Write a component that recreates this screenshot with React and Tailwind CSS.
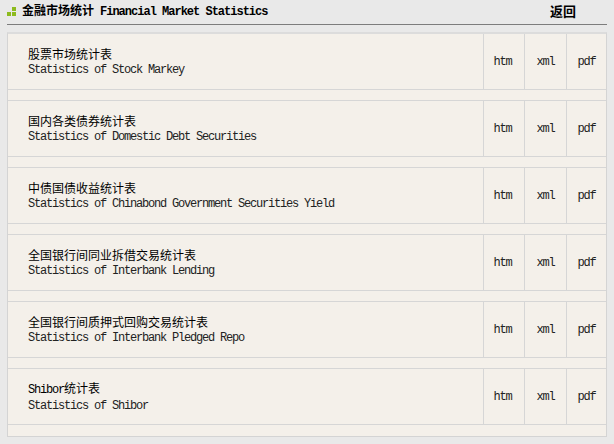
const reports = [
  { cn: "股票市场统计表", en: "Statistics of Stock Markey" },
  { cn: "国内各类债券统计表", en: "Statistics of Domestic Debt Securities" },
  { cn: "中债国债收益统计表", en: "Statistics of Chinabond Government Securities Yield" },
  { cn: "全国银行间同业拆借交易统计表", en: "Statistics of Interbank Lending" },
  { cn: "全国银行间质押式回购交易统计表", en: "Statistics of Interbank Pledged Repo" },
  { cn: "统计表", prefix: "Shibor", en: "Statistics of Shibor" },
];

const mono = "font-['Liberation_Mono',monospace] tracking-[-1.2px]";
const cjk = "font-['Noto_Sans_CJK_SC','Liberation_Sans',sans-serif]";

function Logo() {
  return (
    <div className="grid grid-cols-[4px_4px] grid-rows-[4px_4px] gap-[1px]">
      <span />
      <span className="bg-[#8dbb1f]" />
      <span className="bg-[#8dbb1f]" />
      <span className="bg-[#8dbb1f]" />
    </div>
  );
}

function ReportRow({ item, last }) {
  return (
    <div>
      <div className="flex h-[56px] border-b border-[#d6d6d6]">
        <div className="flex flex-1 flex-col justify-center pl-[20px] pt-[1px]">
          <p className={`text-[12px] leading-[16px] text-black ${cjk}`}>
            {item.prefix && <span className={mono}>{item.prefix}</span>}
            {item.cn}
          </p>
          <p className={`text-[12px] leading-[16px] text-[#222] ${mono}`}>{item.en}</p>
        </div>
        {["htm", "xml", "pdf"].map((t, i) => (
          <div
            key={t}
            className={`flex items-center justify-center border-l border-[#d6d6d6] pt-[1px] text-[12px] text-[#222] ${mono} ${
              i === 0 ? "w-[41px] pr-[3px]" : i === 1 ? "w-[42px]" : "w-[40px]"
            }`}
          >
            {t}
          </div>
        ))}
      </div>
      <div className={`h-[11px] ${last ? "" : "border-b border-[#d6d6d6]"}`} />
    </div>
  );
}

export default function App() {
  return (
    <div className="h-[444px] w-[614px] overflow-hidden bg-[#e9e9e9] text-black">
      <header className="mx-[7px] flex h-[25px] items-center border-b border-[#7d7d7d] pb-[2px]">
        <Logo />
        <h1 className="ml-[6px] flex items-baseline font-bold">
          <span className={`text-[12px] ${cjk}`}>金融市场统计</span>
          <span className={`ml-[6px] text-[12px] ${mono} tracking-[-1px]`}>Financial Market Statistics</span>
        </h1>
        <a className={`ml-auto mr-[31px] text-[13px] font-bold ${cjk}`}>返回</a>
      </header>
      <section className="mx-[7px] mt-[7px] w-[600px] border border-t-2 border-[#d4d4d4] border-t-[#dcdcdc] bg-[#f4f0ea]">
        {reports.map((item, i) => (
          <ReportRow key={item.en} item={item} last={i === reports.length - 1} />
        ))}
      </section>
    </div>
  );
}
